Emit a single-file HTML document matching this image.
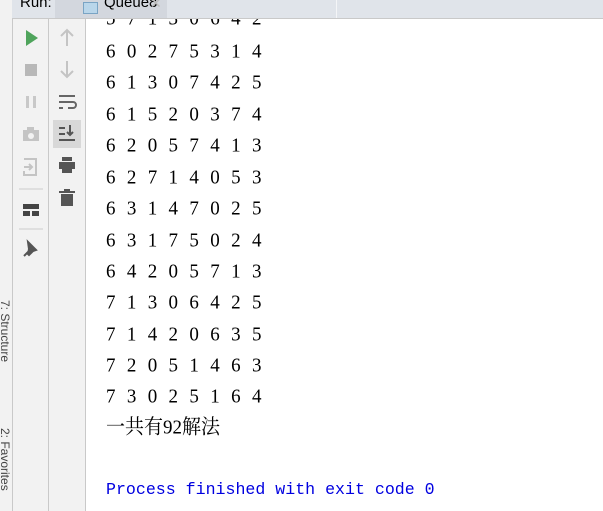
<!DOCTYPE html><html><head><meta charset="utf-8"><style>
body{margin:0;width:603px;height:511px;overflow:hidden;background:#fff;position:relative;font-family:"Liberation Sans",sans-serif}
.a{position:absolute}
.t{z-index:5}
.ln{position:absolute;left:106px;font-family:"Liberation Serif",serif;font-size:19px;letter-spacing:3.3px;color:#000;white-space:pre;line-height:20px;transform:scaleY(1.08)}
</style></head><body>
<div class="ln" style="top:9px">5 7 1 3 0 6 4 2</div>
<div class="ln" style="top:42px">6 0 2 7 5 3 1 4</div>
<div class="ln" style="top:73px">6 1 3 0 7 4 2 5</div>
<div class="ln" style="top:105px">6 1 5 2 0 3 7 4</div>
<div class="ln" style="top:136px">6 2 0 5 7 4 1 3</div>
<div class="ln" style="top:168px">6 2 7 1 4 0 5 3</div>
<div class="ln" style="top:199px">6 3 1 4 7 0 2 5</div>
<div class="ln" style="top:231px">6 3 1 7 5 0 2 4</div>
<div class="ln" style="top:262px">6 4 2 0 5 7 1 3</div>
<div class="ln" style="top:293px">7 1 3 0 6 4 2 5</div>
<div class="ln" style="top:325px">7 1 4 2 0 6 3 5</div>
<div class="ln" style="top:356px">7 2 0 5 1 4 6 3</div>
<div class="ln" style="top:387px">7 3 0 2 5 1 6 4</div>
<div class="ln" style="top:418px;letter-spacing:0;font-family:'Liberation Serif','Noto Serif CJK SC',serif">一共有92解法</div>
<div class="a" style="left:106px;top:480px;font-family:'Liberation Mono',monospace;font-size:16.6px;color:#0000e0;white-space:pre;line-height:20px">Process finished with exit code 0</div>

<div class="a t" style="left:0;top:0;width:12px;height:511px;background:#f2f2f2;border-right:1px solid #c9c9c9"></div>
<div class="a t" style="left:13px;top:18px;width:35px;height:493px;background:#f2f2f2;border-right:1px solid #c9c9c9"></div>
<div class="a t" style="left:49px;top:18px;width:36px;height:493px;background:#f2f2f2;border-right:1px solid #c9c9c9"></div>
<div class="a t" style="left:12px;top:0;width:591px;height:18px;background:#e0e4ea;border-bottom:1px solid #c9c9c9"></div>
<div class="a t" style="left:55px;top:0;width:112px;height:18px;background:#d3d7de"></div>
<div class="a t" style="left:336px;top:0;width:1px;height:18px;background:#f4f5f7"></div>
<div class="a t" style="left:20px;top:-6px;font-size:15px;color:#000">Run:</div>
<div class="a t" style="left:83px;top:2px;width:13px;height:10px;background:#b9d6ea;border:1px solid #7aa4c4"></div>
<div class="a t" style="left:104px;top:-6px;font-size:15px;color:#000">Queue8</div>
<div class="a t" style="left:150px;top:-5px;font-size:14px;color:#bbb">✕</div>
<svg class="a t" style="left:13px;top:18px" width="36" height="250">
<polygon points="13,12 13,28 25,20" fill="#4fa45c"/>
<rect x="12" y="46" width="12" height="12" fill="#b8b8b8"/>
<rect x="13" y="78" width="3" height="12" fill="#c8c8c8"/><rect x="20" y="78" width="3" height="12" fill="#c8c8c8"/>
<rect x="10" y="112" width="16" height="11" fill="#c4c4c4"/><rect x="14" y="109" width="7" height="4" fill="#c4c4c4"/><circle cx="18" cy="118" r="3" fill="#f2f2f2"/>
<path d="M11 141h12v16H11v-4M11 149h8M16 146l3 3-3 3" fill="none" stroke="#c4c4c4" stroke-width="2"/>
<line x1="6" y1="171" x2="30" y2="171" stroke="#ccc"/>
<rect x="10" y="186" width="16" height="5" fill="#444"/><rect x="10" y="193" width="7" height="5" fill="#444"/><rect x="19" y="193" width="7" height="5" fill="#444"/>
<line x1="6" y1="211" x2="30" y2="211" stroke="#ccc"/>
<path d="M11 238l6-6M15 224l8 8-3 1-4 4-1-1 1-5z" stroke="#555" fill="#555" stroke-width="2"/>
</svg>
<svg class="a t" style="left:50px;top:18px" width="36" height="200">
<path d="M17 28V12M11 18l6-6 6 6" fill="none" stroke="#c4c4c4" stroke-width="2"/>
<path d="M17 43v16M11 53l6 6 6-6" fill="none" stroke="#c4c4c4" stroke-width="2"/>
<path d="M9 78h16M9 84h14a3 3 0 010 6h-5M9 90h4" fill="none" stroke="#666" stroke-width="2"/>
<rect x="3" y="102" width="28" height="28" fill="#d8d8d8"/>
<path d="M9 110h6M9 116h6M9 122h16M20 107v10M17 114l3 3 3-3" fill="none" stroke="#555" stroke-width="2"/>
<rect x="12" y="139" width="10" height="4" fill="#555"/><rect x="9" y="144" width="16" height="7" fill="#555"/><rect x="12" y="151" width="10" height="4" fill="#555"/>
<rect x="9" y="173" width="16" height="2" fill="#555"/><rect x="14" y="171" width="6" height="2" fill="#555"/><rect x="11" y="176" width="12" height="12" fill="#555"/>
</svg>
<div class="a t" style="left:12px;top:300px;transform:rotate(90deg);transform-origin:left top;font-size:12px;color:#444;white-space:nowrap">7: Structure</div>
<div class="a t" style="left:12px;top:428px;transform:rotate(90deg);transform-origin:left top;font-size:12px;color:#444;white-space:nowrap">2: Favorites</div>
</body></html>
